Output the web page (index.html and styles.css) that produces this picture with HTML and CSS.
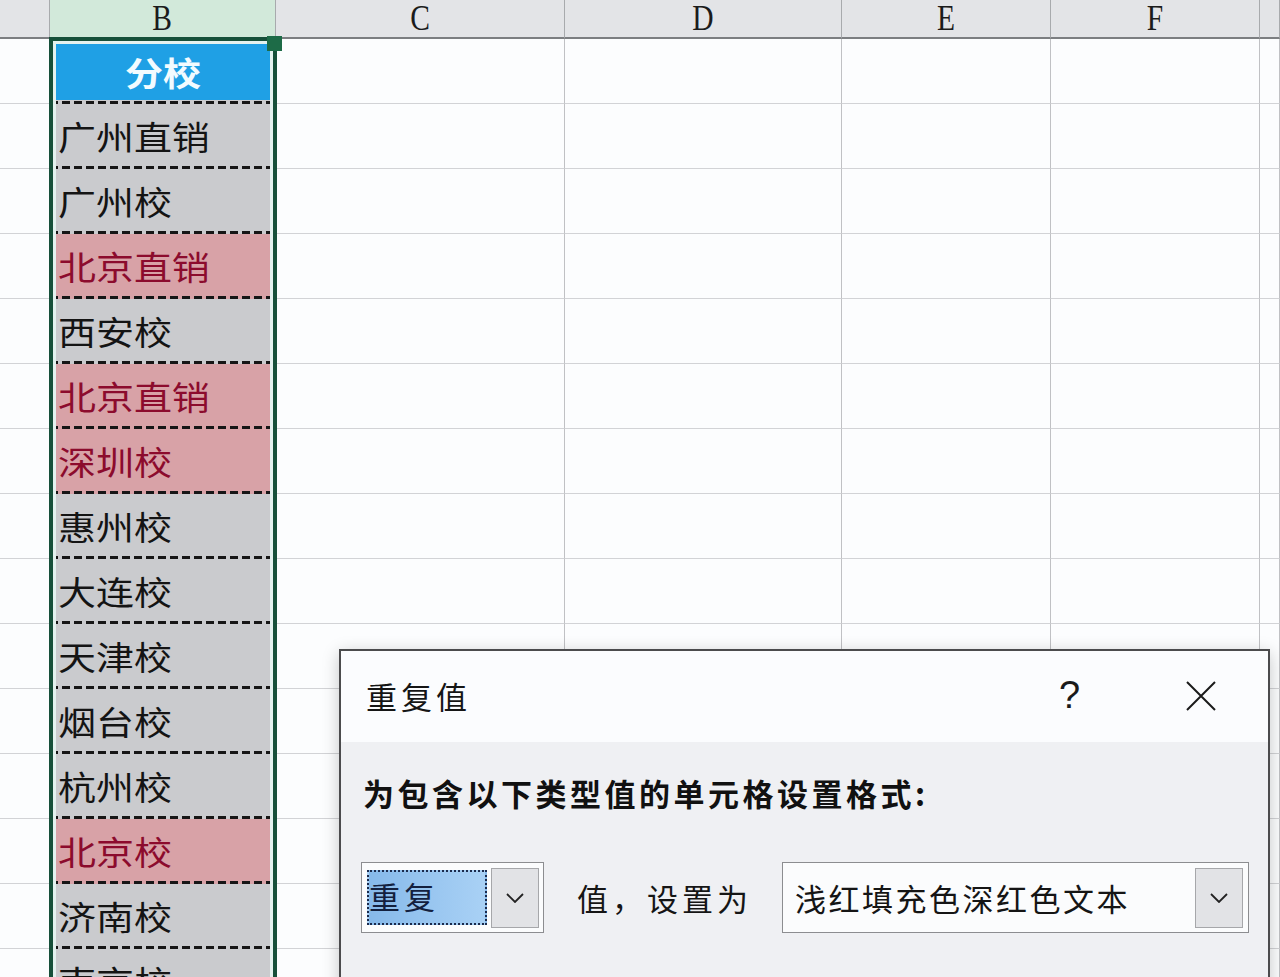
FILE: index.html
```html
<!DOCTYPE html>
<html lang="zh-CN">
<head>
<meta charset="utf-8">
<title>重复值</title>
<link rel="stylesheet" href="styles.css">
</head>
<body>
<div class="sheet">
  <div class="ch"></div><div class="ch sel"><span>B</span></div><div class="ch"><span>C</span></div><div class="ch"><span>D</span></div><div class="ch"><span>E</span></div><div class="ch"><span>F</span></div><div class="ch"></div>

  <div class="c"></div><div class="b hd"><span>分校</span></div><div class="c"></div><div class="c"></div><div class="c"></div><div class="c"></div><div class="c"></div>
  <div class="c"></div><div class="b"><span>广州直销</span></div><div class="c"></div><div class="c"></div><div class="c"></div><div class="c"></div><div class="c"></div>
  <div class="c"></div><div class="b"><span>广州校</span></div><div class="c"></div><div class="c"></div><div class="c"></div><div class="c"></div><div class="c"></div>
  <div class="c"></div><div class="b dup"><span>北京直销</span></div><div class="c"></div><div class="c"></div><div class="c"></div><div class="c"></div><div class="c"></div>
  <div class="c"></div><div class="b"><span>西安校</span></div><div class="c"></div><div class="c"></div><div class="c"></div><div class="c"></div><div class="c"></div>
  <div class="c"></div><div class="b dup"><span>北京直销</span></div><div class="c"></div><div class="c"></div><div class="c"></div><div class="c"></div><div class="c"></div>
  <div class="c"></div><div class="b dup"><span>深圳校</span></div><div class="c"></div><div class="c"></div><div class="c"></div><div class="c"></div><div class="c"></div>
  <div class="c"></div><div class="b"><span>惠州校</span></div><div class="c"></div><div class="c"></div><div class="c"></div><div class="c"></div><div class="c"></div>
  <div class="c"></div><div class="b"><span>大连校</span></div><div class="c"></div><div class="c"></div><div class="c"></div><div class="c"></div><div class="c"></div>
  <div class="c"></div><div class="b"><span>天津校</span></div><div class="c"></div><div class="c"></div><div class="c"></div><div class="c"></div><div class="c"></div>
  <div class="c"></div><div class="b"><span>烟台校</span></div><div class="c"></div><div class="c"></div><div class="c"></div><div class="c"></div><div class="c"></div>
  <div class="c"></div><div class="b"><span>杭州校</span></div><div class="c"></div><div class="c"></div><div class="c"></div><div class="c"></div><div class="c"></div>
  <div class="c"></div><div class="b dup"><span>北京校</span></div><div class="c"></div><div class="c"></div><div class="c"></div><div class="c"></div><div class="c"></div>
  <div class="c"></div><div class="b"><span>济南校</span></div><div class="c"></div><div class="c"></div><div class="c"></div><div class="c"></div><div class="c"></div>
  <div class="c"></div><div class="b"><span>南京校</span></div><div class="c"></div><div class="c"></div><div class="c"></div><div class="c"></div><div class="c"></div>
</div>

<div class="selbox"></div>
<div class="handle"></div>

<div class="dlg">
  <div class="dlg-title">
    <span class="t">重复值</span>
    <span class="help">?</span>
    <svg class="close" width="30" height="30" viewBox="0 0 30 30"><path d="M1 1 L29 29 M29 1 L1 29" stroke="#1a1a1a" stroke-width="2" fill="none"/></svg>
  </div>
  <div class="dlg-body">
    <div class="label">为包含以下类型值的单元格设置格式:</div>
    <div class="ctrl-row">
      <div class="dd dd1">
        <div class="dd-sel">重复</div>
        <div class="dd-btn"><svg width="18" height="10" viewBox="0 0 18 10"><path d="M1 1 L9 9 L17 1" stroke="#222" stroke-width="1.8" fill="none"/></svg></div>
      </div>
      <div class="mid">值，设置为</div>
      <div class="dd dd2">
        <div class="dd-text">浅红填充色深红色文本</div>
        <div class="dd-btn"><svg width="18" height="10" viewBox="0 0 18 10"><path d="M1 1 L9 9 L17 1" stroke="#222" stroke-width="1.8" fill="none"/></svg></div>
      </div>
    </div>
  </div>
</div>
</body>
</html>
```

FILE: styles.css
```css
* { box-sizing: border-box; margin: 0; padding: 0; }
html, body { width: 1280px; height: 977px; overflow: hidden; background: #fdfdfe; }
body { position: relative; font-family: "Noto Sans CJK SC", "Noto Sans", sans-serif; color: #141414; }

.sheet {
  display: grid;
  grid-template-columns: 50px 226px 289px 277px 209px 209px 1fr;
  grid-template-rows: 39px;
  grid-auto-rows: 65px;
}
.c {
  background: #fcfdfe;
  border-right: 1px solid #c0c1c4;
  border-bottom: 1px solid #d2d3d6;
}
.ch {
  background: #e3e4e7;
  border-right: 1px solid #a8aaad;
  border-bottom: 2px solid #7c7e81;
  font-family: "Liberation Serif", serif;
  font-size: 36px;
  line-height: 37px;
  text-align: center;
  color: #1b1b1b;
}
.ch span { display: inline-block; transform: scaleX(0.82); }
.ch.sel { background: #d2e9da; }

.b {
  display: flex;
  align-items: center;
  padding: 0 0 2px 8px;
  font-size: 33px;
  color: #141414;
  background: repeating-linear-gradient(90deg, #161616 0 8px, transparent 8px 12px) left bottom / 100% 3px no-repeat, #cacbce;
}
.b span { display: inline-block; transform: scaleX(1.15); transform-origin: left center; }
.b.dup {
  color: #8c0b2d;
  background: repeating-linear-gradient(90deg, #161616 0 8px, transparent 8px 12px) left bottom / 100% 3px no-repeat, #d8a2a7;
}
.b.hd {
  justify-content: center;
  padding: 4px 0 4px 0;
  font-weight: 700;
  color: #f2fbff;
  background: repeating-linear-gradient(90deg, #161616 0 8px, transparent 8px 12px) left bottom / 100% 3px no-repeat,
              linear-gradient(#1fa0e5, #1fa0e5) left 4px / 100% 57px no-repeat, #cacbce;
}
.b.hd span { transform-origin: center; }

.selbox {
  position: absolute;
  left: 49px;
  top: 37px;
  width: 228px;
  height: 960px;
  border: 4px solid #17503a;
  box-shadow: inset 0 0 0 3px #e4f2ef;
}
.handle {
  position: absolute;
  left: 267px;
  top: 36px;
  width: 15px;
  height: 15px;
  background: #1d6b47;
}

.dlg {
  position: absolute;
  left: 339px;
  top: 649px;
  width: 931px;
  height: 360px;
  border: 2px solid #4b4b4d;
  border-bottom: none;
  background: #eff0f3;
  box-shadow: 0 4px 16px rgba(0, 0, 0, 0.22);
}
.dlg-title {
  height: 91px;
  background: #fbfcfe;
  display: flex;
  align-items: center;
  padding-left: 25px;
  padding-bottom: 2px;
}
.dlg-title .t {
  flex: 1;
  font-size: 31px;
  letter-spacing: 4px;
  color: #151515;
}
.help {
  width: 20px;
  text-align: center;
  font-family: "Liberation Sans", sans-serif;
  font-size: 38px;
  color: #1a1a1a;
  margin-right: 107px;
}
.close { margin-right: 52px; }

.dlg-body { padding-left: 20px; }
.label {
  margin: 31px 0 0 2px;
  font-size: 31px;
  font-weight: 700;
  letter-spacing: 3.5px;
  line-height: 40px;
  color: #111;
}
.ctrl-row {
  margin-top: 49px;
  display: flex;
  align-items: center;
}
.dd {
  height: 71px;
  border: 1px solid #8c8d90;
  background: #fbfcfd;
  display: flex;
  align-items: center;
}
.dd1 { width: 183px; padding-left: 5px; }
.dd-sel {
  width: 120px;
  height: 55px;
  border: 2px dotted #1a2a4c;
  background: linear-gradient(90deg, #86b9ea, #a9d1f5);
  font-size: 31px;
  letter-spacing: 4px;
  line-height: 48px;
  color: #13203e;
}
.dd-btn {
  width: 48px;
  height: 60px;
  margin-left: 4px;
  border: 1px solid #a6a7aa;
  background: #e2e3e6;
  display: flex;
  align-items: center;
  justify-content: center;
}
.mid {
  margin-left: 33px;
  font-size: 31px;
  letter-spacing: 4px;
  color: #151515;
}
.dd2 { width: 467px; margin-left: 30px; padding-left: 12px; }
.dd-text {
  flex: 1;
  font-size: 31px;
  letter-spacing: 2.5px;
  color: #151515;
}
.dd2 .dd-btn { margin-right: 5px; }
```
